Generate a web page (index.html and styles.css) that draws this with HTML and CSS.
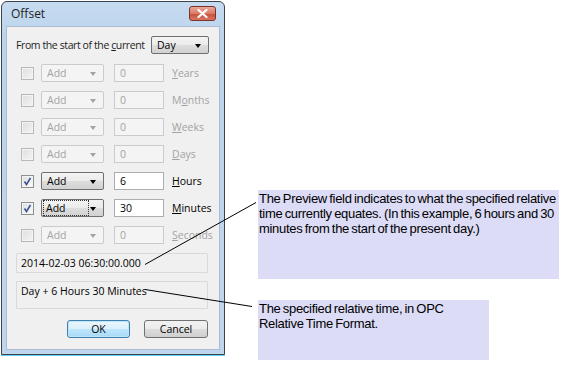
FILE: index.html
```html
<!DOCTYPE html>
<html lang="en">
  <head>
    <title>Offset dialog</title>
    <link rel="stylesheet" href="styles.css">
  </head>
  <body>
    <div class="page">
      <!-- Offset dialog -->
      <div class="window">
        <div class="titlebar">
          <span class="title">Offset</span>
          <span class="close">
            <svg width="11" height="9" viewBox="0 0 11 9">
              <path d="M1.5 1 L9.5 8 M9.5 1 L1.5 8" stroke="#fff" stroke-width="2.2" stroke-linecap="round"/>
            </svg>
          </span>
        </div>

        <div class="client">
          <div class="from-row">
            <span class="from-label">From the start of the <u>c</u>urrent</span>
            <div class="combo active small">Day<span class="arrow"></span></div>
          </div>

          <div class="unit-row off">
            <span class="check"></span>
            <div class="combo">Add<span class="arrow"></span></div>
            <div class="edit">0</div>
            <span class="unit"><u>Y</u>ears</span>
          </div>
          <div class="unit-row off">
            <span class="check"></span>
            <div class="combo">Add<span class="arrow"></span></div>
            <div class="edit">0</div>
            <span class="unit">M<u>o</u>nths</span>
          </div>
          <div class="unit-row off">
            <span class="check"></span>
            <div class="combo">Add<span class="arrow"></span></div>
            <div class="edit">0</div>
            <span class="unit"><u>W</u>eeks</span>
          </div>
          <div class="unit-row off">
            <span class="check"></span>
            <div class="combo">Add<span class="arrow"></span></div>
            <div class="edit">0</div>
            <span class="unit"><u>D</u>ays</span>
          </div>
          <div class="unit-row">
            <span class="check checked">
              <svg width="11" height="11" viewBox="0 0 11 11"><path d="M2.5 5.5 L4.5 8.5 L8.5 2" fill="none" stroke="#3f5596" stroke-width="1.6"/></svg>
            </span>
            <div class="combo active">Add<span class="arrow"></span></div>
            <div class="edit">6</div>
            <span class="unit"><u>H</u>ours</span>
          </div>
          <div class="unit-row">
            <span class="check checked">
              <svg width="11" height="11" viewBox="0 0 11 11"><path d="M2.5 5.5 L4.5 8.5 L8.5 2" fill="none" stroke="#3f5596" stroke-width="1.6"/></svg>
            </span>
            <div class="combo active"><span class="focus">Add</span><span class="arrow"></span></div>
            <div class="edit">30</div>
            <span class="unit"><u>M</u>inutes</span>
          </div>
          <div class="unit-row off">
            <span class="check"></span>
            <div class="combo">Add<span class="arrow"></span></div>
            <div class="edit">0</div>
            <span class="unit"><u>S</u>econds</span>
          </div>

          <div class="field preview">2014-02-03 06:30:00.000</div>
          <div class="field relative">Day + 6 Hours 30 Minutes</div>

          <div class="buttons">
            <div class="btn default">OK</div>
            <div class="btn">Cancel</div>
          </div>
        </div>
      </div>

      <!-- Annotations -->
      <div class="notes">
        <div class="note note-preview">
          The Preview field indicates to what the specified relative time currently equates. (In this example, 6 hours and 30 minutes from the start of the present day.)
        </div>
        <div class="note note-format">
          The specified relative time, in OPC Relative Time Format.
        </div>
      </div>

      <svg class="leaders" width="570" height="370">
        <line x1="145" y1="264.5" x2="256" y2="202.5" stroke="#000" stroke-width="1"/>
        <line x1="145" y1="289.5" x2="252" y2="306.5" stroke="#000" stroke-width="1"/>
      </svg>
    </div>
  </body>
</html>
```

FILE: styles.css
```css
* {
  box-sizing: border-box;
}

body {
  margin: 0;
  background-color: white;
  font-family: "Liberation Sans", Arial, sans-serif;
}

.page {
  position: relative;
  display: flex;
  width: 570px;
  height: 370px;
}

/* dialog frame */
.window {
  display: flex;
  flex-direction: column;
  margin: 1px 0 0 1px;
  width: 224px;
  height: 354px;
  padding: 0 5px 5px 5px;
  border: 1px solid #3b434e;
  border-radius: 6px 6px 0 0;
  background-image: linear-gradient(#c6dbf0, #bcd3ec 40px, #c0d6ee);
  box-shadow: 0 1px 0 #5fd0ee;
}

.titlebar {
  display: flex;
  justify-content: space-between;
  align-items: center;
  height: 25px;
  padding: 0 3px 2px 4px;
}

.title {
  font-family: "Open Sans", "Noto Sans", sans-serif;
  font-size: 12px;
  color: #1e1e1e;
}

.close {
  display: flex;
  justify-content: center;
  align-items: center;
  width: 27px;
  height: 15px;
  border: 1px solid #7a3328;
  border-radius: 3px;
  background-image: linear-gradient(#eaa89a, #db7b68 50%, #c9533c 55%, #d77560);
}

.client {
  flex: 1;
  background-color: #f0f0f0;
  box-shadow: 0 0 0 1px #a9bcd2;
  font-family: "Open Sans", "Noto Sans", sans-serif;
  font-size: 10.5px;
  color: #1e1e1e;
}

u {
  text-decoration: underline;
  text-underline-offset: 1px;
}

.from-row {
  display: flex;
  justify-content: space-between;
  align-items: center;
  height: 18px;
  margin: 9px 10px 0 9px;
  white-space: nowrap;
}

.from-label {
  letter-spacing: -0.4px;
}

.unit-row {
  display: flex;
  align-items: center;
  height: 18px;
  margin-top: 9px;
  padding-left: 14px;
}

.from-row + .unit-row {
  margin-top: 10px;
}

/* checkbox */
.check {
  display: flex;
  justify-content: center;
  align-items: center;
  width: 13px;
  height: 13px;
  margin-right: 7px;
  border: 1px solid #8e8f8f;
  background-image: linear-gradient(135deg, #dcdcdc, #fdfdfd);
  box-shadow: inset 0 0 0 1px #f4f4f4;
}

.off .check {
  border-color: #b8b8b8;
  background-image: linear-gradient(135deg, #dedede, #f4f4f4);
}

/* combo box */
.combo {
  position: relative;
  display: flex;
  align-items: center;
  width: 63px;
  height: 18px;
  margin-right: 10px;
  padding-left: 5px;
  border: 1px solid #c9cbcd;
  border-radius: 2px;
  background-color: #f4f4f4;
  color: #a3a3a3;
}

.combo.active {
  border-color: #707070;
  background-image: linear-gradient(#f3f3f3, #ebebeb 50%, #dddddd 51%, #d2d2d2);
  color: #000;
}

.combo.small {
  width: 58px;
  margin-right: 0;
}

.arrow {
  position: absolute;
  right: 7px;
  top: 7px;
  border-left: 3.5px solid transparent;
  border-right: 3.5px solid transparent;
  border-top: 4px solid #a3a3a3;
}

.combo.active .arrow {
  border-top-color: #000;
}

.focus {
  display: flex;
  align-items: center;
  width: 44px;
  height: 14px;
  margin-left: -3px;
  padding-left: 2px;
  outline: 1px dotted #333;
}

/* text box */
.edit {
  display: flex;
  align-items: center;
  width: 50px;
  height: 18px;
  margin-right: 8px;
  padding-left: 5px;
  border: 1px solid #abadb3;
  background-color: white;
  color: #000;
}

.off .edit {
  border-color: #c9cbcd;
  background-color: #f4f4f4;
  color: #a3a3a3;
}

.unit {
  color: #000;
}

.off .unit {
  color: #a3a3a3;
}

/* read only fields */
.field {
  margin: 9px 11px 0 9px;
  padding: 2px 0 0 4px;
  border: 1px solid #d9d9d9;
  border-radius: 1px;
  color: #000;
}

.preview {
  height: 20px;
}

.relative {
  height: 28px;
  margin-top: 8px;
}

.buttons {
  display: flex;
  justify-content: flex-end;
  gap: 14px;
  margin: 11px 11px 0 0;
}

.btn {
  display: flex;
  justify-content: center;
  align-items: center;
  width: 64px;
  height: 18px;
  border: 1px solid #707070;
  border-radius: 3px;
  background-image: linear-gradient(#f2f2f2, #ebebeb 50%, #dddddd 51%, #cfcfcf);
  color: #000;
}

.btn.default {
  width: 63px;
  border-color: #3c7fb1;
  background-image: linear-gradient(#eaf6fd, #d9f0fc 50%, #bee6fd 51%, #a7d9f5);
  box-shadow: inset 0 0 0 1px #c1e5f7;
}

/* annotation boxes */
.notes {
  display: flex;
  flex-direction: column;
  padding-top: 190px;
  margin-left: 33px;
}

.note {
  padding: 1px 0 0 1px;
  background-color: #dcdcf6;
  font-size: 13px;
  line-height: 15px;
  color: #000;
  letter-spacing: -0.3px;
  word-spacing: -1px;
}

.note-preview {
  width: 301px;
  height: 89px;
}

.note-format {
  width: 231px;
  height: 60px;
  margin-top: 21px;
}

.leaders {
  position: absolute;
  top: 0;
  left: 0;
  pointer-events: none;
}
```
